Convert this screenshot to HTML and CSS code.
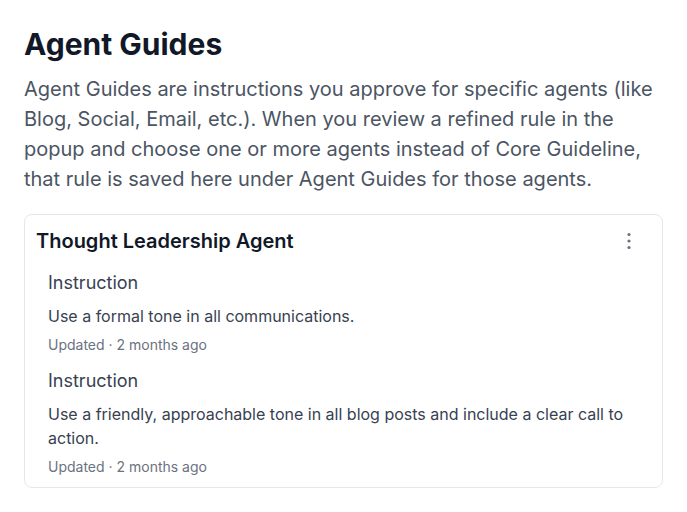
FILE: index.html
```html
<!DOCTYPE html>
<html lang="en">
<head>
<meta charset="utf-8">
<title>Agent Guides</title>
<link rel="stylesheet" href="styles.css">
</head>
<body>
<main class="page">
  <h1 class="title">Agent Guides</h1>
  <p class="intro">Agent Guides are instructions you approve for specific agents (like Blog, Social, Email, etc.). When you review a refined rule in the popup and choose one or more agents instead of Core Guideline, that rule is saved here under Agent Guides for those agents.</p>
  <section class="card">
    <header class="card-head">
      <h2 class="card-title">Thought Leadership Agent</h2>
      <button class="menu-btn" aria-label="More options">
        <svg width="16" height="18" viewBox="0 0 16 18"><circle cx="8" cy="2.5" r="1.6"/><circle cx="8" cy="9" r="1.6"/><circle cx="8" cy="15.5" r="1.6"/></svg>
      </button>
    </header>
    <div class="items">
      <article class="item">
        <h3 class="item-label">Instruction</h3>
        <p class="item-text">Use a formal tone in all communications.</p>
        <p class="item-meta">Updated · 2 months ago</p>
      </article>
      <article class="item">
        <h3 class="item-label">Instruction</h3>
        <p class="item-text">Use a friendly, approachable tone in all blog posts and include a clear call to action.</p>
        <p class="item-meta">Updated · 2 months ago</p>
      </article>
    </div>
  </section>
</main>
</body>
</html>
```
FILE: styles.css
```css
* { box-sizing: border-box; }
html, body { margin: 0; padding: 0; background: #ffffff; }
body {
  font-family: Inter, "Noto Sans", sans-serif;
  color: #111827;
}
.page { padding: 24px; }
.title {
  margin: 0;
  font-size: 30px;
  line-height: 40px;
  font-weight: 700;
  color: #111827;
}
.intro {
  margin: 10px 0 0;
  font-size: 20px;
  line-height: 30px;
  color: #4b5563;
}
.card {
  margin-top: 20px;
  border: 1px solid #e5e7eb;
  border-radius: 8px;
  padding: 12px 11px 10px;
  background: #fff;
}
.card-head {
  display: flex;
  align-items: center;
  justify-content: space-between;
}
.card-title {
  margin: 0;
  font-size: 20px;
  line-height: 28px;
  font-weight: 600;
  color: #111827;
}
.menu-btn {
  border: 0;
  background: none;
  padding: 0;
  margin-right: 14px;
  width: 16px;
  height: 18px;
  display: flex;
  fill: #6b7280;
}
.items {
  display: flex;
  flex-direction: column;
  gap: 13px;
  margin-top: 15px;
}
.item { padding: 0 12px; }
.item-label {
  margin: 0;
  font-size: 18px;
  line-height: 26px;
  font-weight: 400;
  color: #374151;
}
.item-text {
  margin: 8px 0 0;
  font-size: 16px;
  line-height: 24px;
  color: #374151;
}
.item-meta {
  margin: 7px 0 0;
  font-size: 14px;
  line-height: 20px;
  color: #6b7280;
}
```
